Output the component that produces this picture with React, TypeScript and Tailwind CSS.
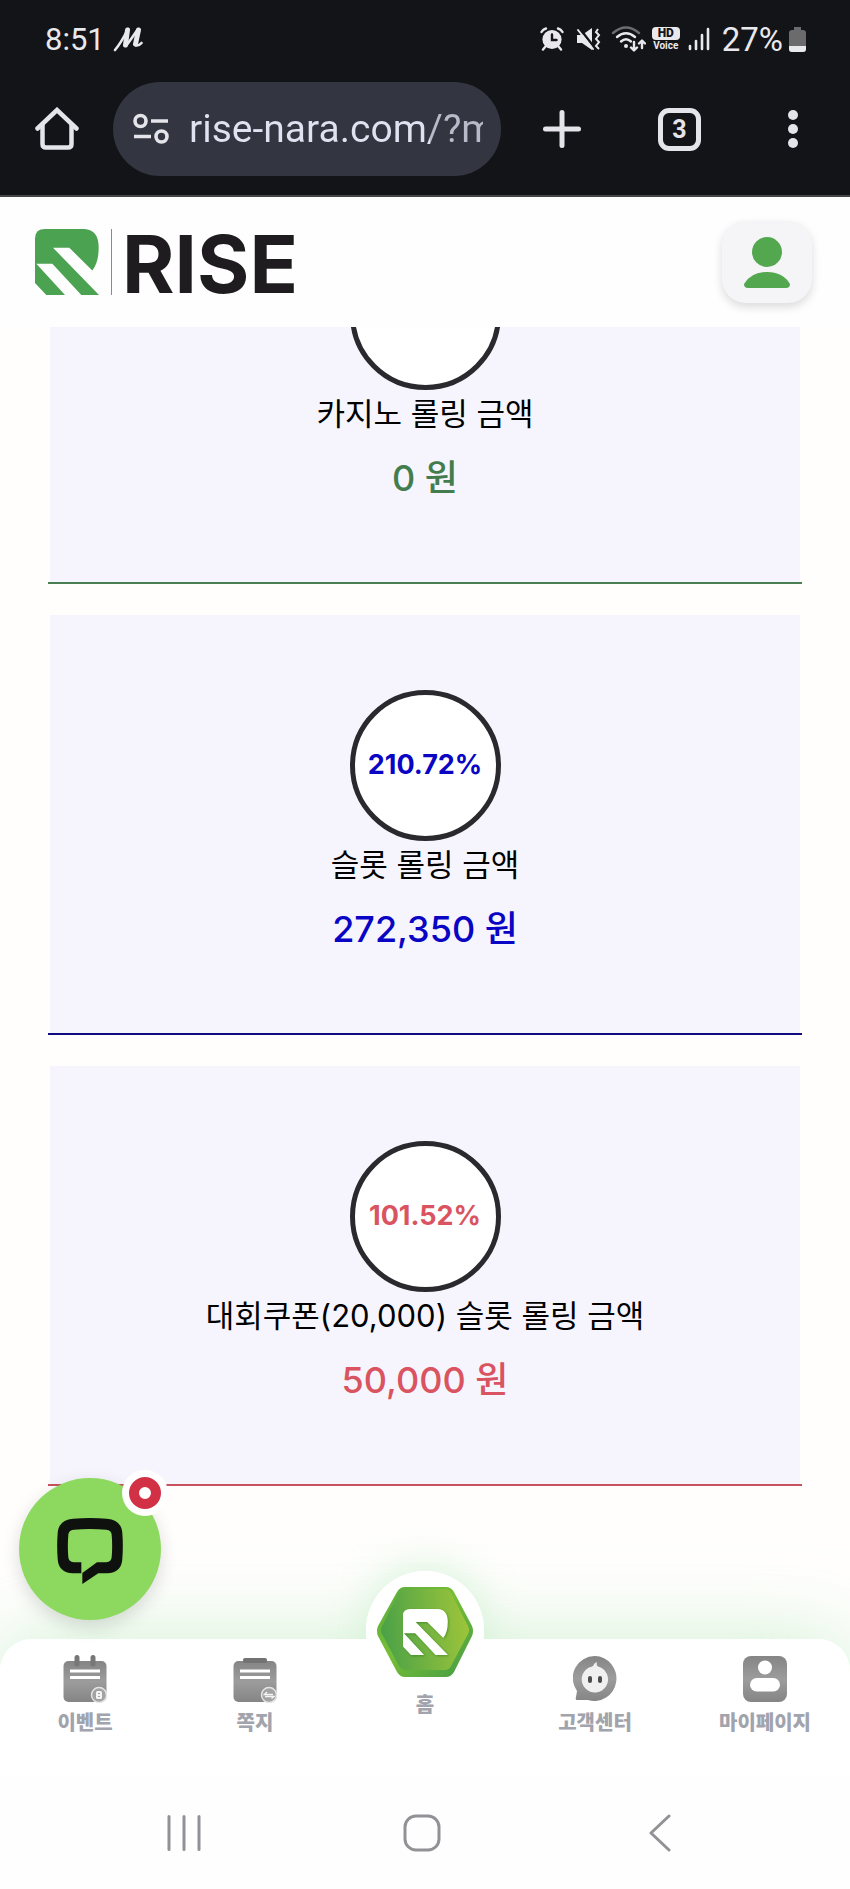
import type { ReactNode } from "react";

interface RollingCardProps {
  percent?: string;
  label: string;
  amount: string;
  lineClass: string;
  textClass: string;
}

const cards: RollingCardProps[] = [
  {
    label: "카지노 롤링 금액",
    amount: "0 원",
    lineClass: "border-[#4a7f56]",
    textClass: "text-[#437d4d]",
  },
  {
    percent: "210.72%",
    label: "슬롯 롤링 금액",
    amount: "272,350 원",
    lineClass: "border-[#120a80]",
    textClass: "text-[#0a04c4]",
  },
  {
    percent: "101.52%",
    label: "대회쿠폰(20,000) 슬롯 롤링 금액",
    amount: "50,000 원",
    lineClass: "border-[#c9525f]",
    textClass: "text-[#da5361]",
  },
];

function RiseMark({ className }: { className: string }) {
  return (
    <svg viewBox="0 0 192 197" preserveAspectRatio="none" className={className} fill="currentColor" aria-hidden>
      <path d="M30 0H148Q191 2 191 56Q191 100 172 124L103 56H54L192 197H139L52 104H4L90 197H34L0 161V28Q0 0 30 0Z" />
    </svg>
  );
}

function StatusBar() {
  return (
    <div className="flex h-[82px] items-center justify-between pb-1 pl-[45px] pr-[44px] text-[#e9e9ed]">
      <div className="flex items-center gap-2">
        <span className="text-[31px] leading-none">8:51</span>
        <svg width="30" height="26" viewBox="0 0 30 26" fill="none" stroke="currentColor" strokeLinecap="round" strokeLinejoin="round" aria-hidden>
          <path d="M2 24Q8 17 15 3" strokeWidth="2.600" />
          <path d="M14.500 4L12.500 19" strokeWidth="5" />
          <path d="M13 20Q19 12 25 3" strokeWidth="2.600" />
          <path d="M25.500 4L22.500 18" strokeWidth="5" />
          <path d="M23 19.500Q26 20 28.500 17" strokeWidth="2.600" />
        </svg>
      </div>
      <div className="flex items-center">
        {/* alarm */}
        <svg width="24" height="24" viewBox="0 0 24 24" fill="none" stroke="currentColor" strokeWidth="2.400" strokeLinecap="round" aria-hidden>
          <circle cx="12" cy="12.500" r="9.600" fill="currentColor" stroke="none" />
          <path d="M1.500 5Q3 2.400 6 1.500M22.500 5Q21 2.400 18 1.500M5.500 19.500L3 22.500M18.500 19.500L21 22.500" />
          <path d="M12 7.500V13H16.500" stroke="#131417" />
        </svg>
        {/* sound off, vibrate */}
        <svg className="ml-3" width="25" height="24" viewBox="0 0 25 24" aria-hidden>
          <path d="M1 8H6L16 1V23L6 16H1Z" fill="currentColor" />
          <path d="M2.500 0L19.500 22" stroke="#131417" strokeWidth="2.500" />
          <path d="M2 3L17 22" stroke="currentColor" strokeWidth="2" strokeLinecap="round" />
          <path d="M22 2L20 5L23 8L20 12L23 15L20 19L23 22" fill="none" stroke="currentColor" strokeWidth="2" />
        </svg>
        {/* wifi with traffic arrows */}
        <svg className="ml-2.5" width="35" height="26" viewBox="0 0 35 26" fill="none" stroke="currentColor" strokeWidth="2.400" strokeLinecap="round" strokeLinejoin="round" aria-hidden>
          <path d="M2 7Q15 -4 28 7" stroke="#6c6d70" />
          <path d="M6 11Q15 3.500 24 11" />
          <path d="M10 15.500Q15 11 20 15.500" />
          <circle cx="15" cy="20" r="2" fill="currentColor" stroke="none" />
          <path d="M23 16V24M20 21.500L23 24.500L26 21.500M31 22V15M28 17.500L31 14.500L34 17.500" />
        </svg>
        <span className="ml-1.5 flex w-7 flex-col items-center" aria-label="HD Voice">
          <span className="w-full rounded-[4px] bg-[#e9e9ed] text-center text-[12px] font-black leading-[13px] text-[#131417]">HD</span>
          <span className="text-[10px] font-bold leading-[11px]">Voice</span>
        </span>
        <svg className="ml-2" width="22" height="24" viewBox="0 0 22 24" stroke="currentColor" strokeWidth="2.600" strokeLinecap="round" aria-hidden>
          <path d="M2 19V22M8 14V22M14 8V22M20 2V22" />
        </svg>
        <span className="ml-3 text-[33px] leading-none">27%</span>
        <svg className="ml-1.5" width="17" height="25" viewBox="0 0 17 25" aria-hidden>
          <path d="M5 0H12V3H14Q17 3 17 6V22Q17 25 14 25H3Q0 25 0 22V6Q0 3 3 3H5Z" fill="#6b6b6e" />
          <path d="M0 19H17V22Q17 25 14 25H3Q0 25 0 22Z" fill="currentColor" />
        </svg>
      </div>
    </div>
  );
}

function BrowserBar() {
  return (
    <div className="flex h-[113px] items-start pl-[35px] pr-[51px] text-[#e4e4ea]">
      <button type="button" aria-label="홈 화면" className="flex h-[94px] w-11 items-center">
        <svg width="44" height="44" viewBox="0 0 44 44" fill="none" stroke="currentColor" strokeWidth="4.500" strokeLinecap="round" aria-hidden>
          <path d="M2.500 21.500L22 3L41.500 21.500" />
          <path d="M7.500 18V37Q7.500 40.500 11 40.500H33Q36.500 40.500 36.500 37V18" />
        </svg>
      </button>
      <div className="ml-[34px] flex h-[94px] min-w-0 flex-1 items-center rounded-full bg-[#333641] pl-5 pr-[18px]">
        <svg className="shrink-0" width="36" height="32" viewBox="0 0 36 32" fill="none" stroke="currentColor" strokeWidth="3.600" aria-hidden>
          <circle cx="7.500" cy="8" r="5.500" />
          <path d="M18 8H35M1 23.500H18" />
          <circle cx="28.500" cy="23.500" r="5.500" />
        </svg>
        <input
          aria-label="주소"
          readOnly
          value="rise-nara.com/?m"
          className="ml-5 w-full min-w-0 bg-[linear-gradient(90deg,#dfe2f1_82%,#b7bac8_82%)] bg-clip-text text-[39px] leading-[60px] text-transparent outline-none"
        />
      </div>
      <button type="button" aria-label="새 탭" className="ml-[42px] flex h-[94px] w-[38px] items-center">
        <svg width="38" height="38" viewBox="0 0 38 38" stroke="currentColor" strokeWidth="5" strokeLinecap="round" aria-hidden>
          <path d="M19 2.500V35.500M2.500 19H35.500" />
        </svg>
      </button>
      <button type="button" aria-label="탭 3개" className="ml-[77px] flex h-[94px] items-center">
        <span className="flex h-[43px] w-[43px] items-center justify-center rounded-[11px] border-[5px] border-[#e4e4ea] text-[25px] font-bold leading-none">
          3
        </span>
      </button>
      <button type="button" aria-label="더보기" className="ml-[86px] flex h-[94px] w-[12px] items-center">
        <svg width="12" height="38" viewBox="0 0 12 38" fill="currentColor" aria-hidden>
          <circle cx="6" cy="5" r="5" />
          <circle cx="6" cy="19" r="5" />
          <circle cx="6" cy="33" r="5" />
        </svg>
      </button>
    </div>
  );
}

function SiteHeader() {
  return (
    <header className="relative z-10 flex h-[130px] items-start justify-between bg-[#fefefe] pl-[35px] pr-[38px] pt-6">
      <a href="#" className="mt-2 flex h-[66px] items-center">
        <RiseMark className="h-[66px] w-16 text-[#4ba251]" />
        <span className="ml-3 h-[66px] w-px bg-[#8a8a8a]" />
        <span className="ml-[10px] pt-1 font-[Inter] text-[80px] font-bold leading-[66px] text-[#1f1c1f]">RISE</span>
      </a>
      <button
        type="button"
        aria-label="내 정보"
        className="flex h-[82px] w-[90px] items-center justify-center rounded-[24px] bg-[#f5f4f6] shadow-[0_4px_10px_rgba(0,0,0,0.14)]"
      >
        <svg width="46" height="52" viewBox="0 0 46 52" fill="#52a74f" aria-hidden>
          <circle cx="23" cy="16" r="15" />
          <path d="M0 48Q7 36 23 36Q39 36 46 48Q46 52 42 52H4Q0 52 0 48Z" />
        </svg>
      </button>
    </header>
  );
}

function RollingCard({ percent, label, amount, lineClass, textClass }: RollingCardProps) {
  return (
    <article className={`border-b-2 px-0.5 ${lineClass}`}>
      <div className="flex h-[418px] flex-col items-center bg-[#f6f5fd] pt-[75px]">
        <div
          className={`flex h-[151px] w-[151px] items-center justify-center rounded-full border-[5px] border-[#2a2a2e] bg-white text-[27px] font-bold ${textClass}`}
        >
          {percent}
        </div>
        <h2 className="text-[31px] leading-[48px] text-black">{label}</h2>
        <p className={`mt-4 text-[36px] font-medium leading-[48px] ${textClass}`}>{amount}</p>
      </div>
    </article>
  );
}

function ChatButton() {
  return (
    <button
      type="button"
      aria-label="채팅 상담"
      className="absolute bottom-[19px] left-[19px] z-20 flex h-[142px] w-[142px] items-center justify-center rounded-full bg-[#8dd95f] pt-1 shadow-[0_6px_18px_rgba(0,0,0,0.14)]"
    >
      <svg width="66" height="66" viewBox="0 0 198 198" aria-hidden>
        <path
          d="M48 2Q99 -2 150 2Q194 6 196 46Q199 84 196 122Q194 164 150 166H124L76 198V165L120 133H148Q163 132 164 118Q167 84 164 50Q163 36 148 35Q99 31 50 35Q35 36 34 50Q31 84 34 118Q35 132 50 133H73V166H48Q4 164 2 122Q-1 84 2 46Q4 6 48 2Z"
          fill="#0e110d"
        />
      </svg>
      <span className="absolute -right-[7px] -top-[8px] flex h-[46px] w-[46px] items-center justify-center rounded-full bg-white">
        <span className="h-8 w-8 rounded-full border-[10px] border-[#d13045] bg-white" />
      </span>
    </button>
  );
}

// Shared gradient for the grey tab icons
function GreyFill({ id }: { id: string }) {
  return (
    <defs>
      <linearGradient id={id} x1="0" y1="0" x2="0" y2="1">
        <stop offset="0" stopColor="#858585" />
        <stop offset="0.500" stopColor="#9c9c9c" />
        <stop offset="1" stopColor="#858585" />
      </linearGradient>
    </defs>
  );
}

function EventIcon() {
  return (
    <svg width="44" height="48" viewBox="0 0 44 48" aria-hidden>
      <GreyFill id="event" />
      <rect x="0.500" y="6" width="43" height="41" rx="5" fill="url(#event)" />
      <path d="M14 2.500V9M30 2.500V9" stroke="#777" strokeWidth="5" strokeLinecap="round" />
      <path d="M7 16H37M7 22.500H37" stroke="#fff" strokeWidth="3" />
      <circle cx="36" cy="40" r="7.500" fill="#a3a3a3" stroke="#e6e6e6" strokeWidth="1.400" />
      <rect x="33" y="36" width="6" height="8" rx="1.500" fill="#f4f4f4" />
      <path d="M35 38.500H37M35 41.500H37" stroke="#a3a3a3" />
    </svg>
  );
}

function NoteIcon() {
  return (
    <svg width="44" height="48" viewBox="0 0 44 48" aria-hidden>
      <GreyFill id="note" />
      <rect x="0.500" y="6" width="43" height="41" rx="5" fill="url(#note)" />
      <rect x="10" y="3" width="24" height="5" rx="2" fill="#737373" />
      <path d="M7 16H37M7 22.500H37" stroke="#fff" strokeWidth="3" />
      <circle cx="36" cy="40" r="7.500" fill="#a3a3a3" stroke="#e6e6e6" strokeWidth="1.400" />
      <path d="M40 39.500H31.500L34 37M32 41.500H41L38.500 43.500" fill="none" stroke="#f4f4f4" strokeWidth="1.400" />
    </svg>
  );
}

function SupportIcon() {
  return (
    <svg width="44" height="48" viewBox="0 0 44 48" aria-hidden>
      <GreyFill id="support" />
      <path d="M22 1A22 22.500 0 1 1 15 45H4Q2 45 3 42L4 36A22 22 0 0 1 22 1Z" fill="url(#support)" />
      <path d="M20 11Q21 8 24 7Q23 10 25 11.500A13.200 13.200 0 1 1 16 12.500Q18 12 20 11Z" fill="#f0f0f0" />
      <rect x="15" y="21" width="4" height="7" rx="2" fill="#4d4d4d" />
      <rect x="25" y="21" width="4" height="7" rx="2" fill="#4d4d4d" />
    </svg>
  );
}

function MyPageIcon() {
  return (
    <svg width="44" height="48" viewBox="0 0 44 48" aria-hidden>
      <GreyFill id="mypage" />
      <rect x="0" y="1" width="44" height="46" rx="8" fill="url(#mypage)" />
      <circle cx="22" cy="12.500" r="7" fill="#fff" />
      <rect x="7" y="23" width="30" height="13.500" rx="6.700" fill="#fff" />
    </svg>
  );
}

function HomeBadge() {
  return (
    <span className="relative flex h-[92px] w-[98px] items-center justify-center">
      <svg className="absolute inset-0" width="98" height="92" viewBox="0 0 98 92" aria-hidden>
        <defs>
          <linearGradient id="hexEdge" x1="0" y1="0" x2="1" y2="1">
            <stop offset="0" stopColor="#58ab3d" />
            <stop offset="0.450" stopColor="#76be35" />
            <stop offset="1" stopColor="#449a45" />
          </linearGradient>
          <linearGradient id="hexFace" x1="0" y1="0.500" x2="1" y2="0.400">
            <stop offset="0" stopColor="#4ba147" />
            <stop offset="1" stopColor="#9dc53a" />
          </linearGradient>
        </defs>
        <path d="M29 1H70Q75 1 78 6L96 40Q98 45 96 50L78 86Q75 91 70 91H29Q24 91 21 86L2 50Q0 45 2 40L21 6Q24 1 29 1Z" fill="url(#hexEdge)" />
        <path d="M29 3H69Q73 3 75 7L92 40Q94 44 92 48L75 80Q73 84 69 84H30Q26 84 23 80L6 48Q4 44 6 40L23 7Q25 3 29 3Z" fill="url(#hexFace)" />
      </svg>
      <RiseMark className="relative h-[46px] w-[45px] text-white drop-shadow-[1px_1px_1px_rgba(0,80,0,0.35)]" />
    </span>
  );
}

function TabLink({ label, children }: { label: string; children: ReactNode }) {
  return (
    <a href="#" className="flex flex-1 flex-col items-center pt-4">
      {children}
      <span className="mt-1.5 text-[20px] font-black leading-[28px] text-[#a1a3ad]">{label}</span>
    </a>
  );
}

function TabBar() {
  return (
    <nav className="relative h-[138px] rounded-t-[32px] bg-white shadow-[0_0_80px_rgba(175,232,182,0.6)]">
      {/* white bump behind the home badge */}
      <span className="absolute -top-[68px] left-1/2 h-[118px] w-[118px] -translate-x-1/2 rounded-full bg-white shadow-[0_-6px_40px_rgba(175,232,182,0.45)]" />
      <div className="relative flex h-full items-start rounded-t-[32px] bg-white">
        <TabLink label="이벤트">
          <EventIcon />
        </TabLink>
        <TabLink label="쪽지">
          <NoteIcon />
        </TabLink>
        <a href="#" className="relative -mt-[68px] flex flex-1 flex-col items-center">
          <span className="flex h-[118px] w-[118px] items-center justify-center rounded-full bg-white pt-1">
            <HomeBadge />
          </span>
          <span className="mt-0.5 text-[20px] font-black leading-[28px] text-[#a1a3ad]">홈</span>
        </a>
        <TabLink label="고객센터">
          <SupportIcon />
        </TabLink>
        <TabLink label="마이페이지">
          <MyPageIcon />
        </TabLink>
      </div>
    </nav>
  );
}

function SystemNav() {
  return (
    <div className="relative grid h-28 grid-cols-3 items-center justify-items-center bg-[#fefefe] pl-[65px] pr-[71px] text-[#929296]">
      <button type="button" aria-label="최근 앱">
        <svg width="36" height="38" viewBox="0 0 36 38" stroke="currentColor" strokeWidth="3" strokeLinecap="round" aria-hidden>
          <path d="M3 2.500V35.500M18 2.500V35.500M33 2.500V35.500" />
        </svg>
      </button>
      <button type="button" aria-label="홈">
        <svg width="38" height="38" viewBox="0 0 38 38" fill="none" stroke="currentColor" strokeWidth="3" aria-hidden>
          <rect x="2" y="2" width="34" height="34" rx="11" />
        </svg>
      </button>
      <button type="button" aria-label="뒤로">
        <svg width="24" height="38" viewBox="0 0 24 38" fill="none" stroke="currentColor" strokeWidth="3" strokeLinecap="round" strokeLinejoin="round" aria-hidden>
          <path d="M21 2L3 19L21 36" />
        </svg>
      </button>
    </div>
  );
}

export default function App() {
  return (
    <div className="flex min-h-screen flex-col bg-[#fefefe] font-[Inter,'Noto_Sans_CJK_KR',sans-serif]">
      <div className="border-b-2 border-[#454548] bg-[#131417] font-[Roboto,'Noto_Sans_CJK_KR',sans-serif]">
        <StatusBar />
        <BrowserBar />
      </div>
      <SiteHeader />
      <div className="relative flex flex-1 flex-col">
        <main className="flex-1 overflow-hidden bg-[#fffefd] px-12 pb-[153px]">
          {/* list is scrolled part way under the header */}
          <div className="-mt-[163px] flex flex-col gap-[31px]">
            {cards.map((card) => (
              <RollingCard key={card.label} {...card} />
            ))}
          </div>
        </main>
        <ChatButton />
      </div>
      <TabBar />
      <SystemNav />
    </div>
  );
}
